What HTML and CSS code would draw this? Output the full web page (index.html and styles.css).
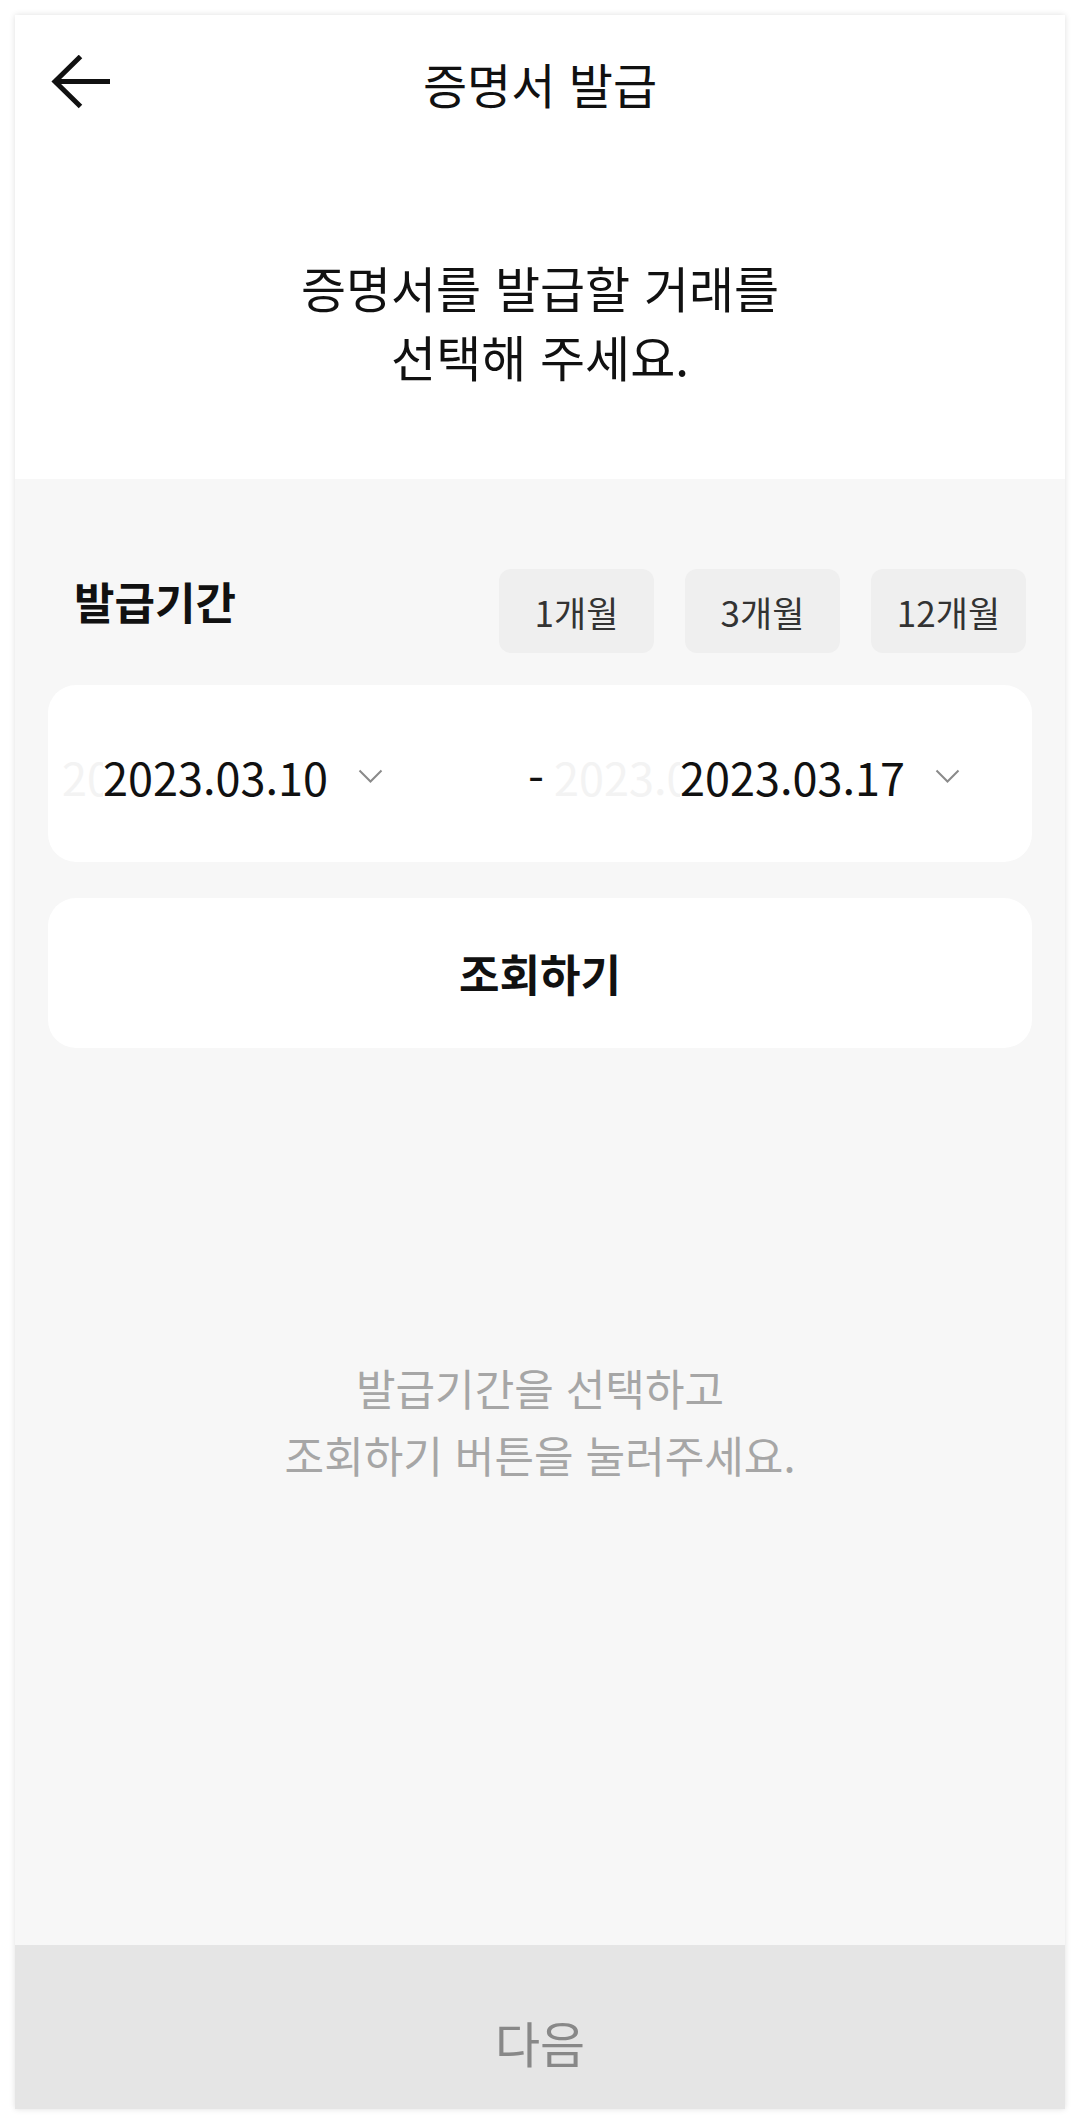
FILE: index.html
```html
<!DOCTYPE html>
<html lang="ko">
<head>
<meta charset="utf-8">
<title>증명서 발급</title>
<link rel="stylesheet" href="styles.css">
</head>
<body>
<div class="app">
  <section class="top">
    <header class="nav">
      <div class="nav-left">
        <svg class="back" width="60" height="56" viewBox="0 0 60 56" aria-hidden="true">
          <path d="M59 26.5 H4 M29.5 1.5 L4 26.5 L29.5 51.5" fill="none" stroke="#111" stroke-width="5" stroke-linejoin="miter" stroke-miterlimit="10"/>
        </svg>
      </div>
      <h1 class="title">증명서 발급</h1>
      <div class="nav-right"></div>
    </header>
    <p class="intro">증명서를 발급할 거래를<br>선택해 주세요.</p>
  </section>

  <main class="content">
    <div class="period-row">
      <span class="period-label">발급기간</span>
      <div class="chips">
        <button class="chip">1개월</button>
        <button class="chip">3개월</button>
        <button class="chip">12개월</button>
      </div>
    </div>

    <div class="date-box">
      <div class="field field-start">
        <span class="ghost">2023.03.10</span>
        <div class="select select-start">
          <span class="date">2023.03.10</span>
          <svg class="chev" width="25" height="15" viewBox="0 0 25 15" aria-hidden="true">
            <path d="M1.5 1.5 L12.5 12.5 L23.5 1.5" fill="none" stroke="#8a8a8a" stroke-width="2"/>
          </svg>
        </div>
      </div>
      <span class="dash">-</span>
      <div class="field field-end">
        <span class="ghost">2023.03.17</span>
        <div class="select select-end">
          <span class="date">2023.03.17</span>
          <svg class="chev" width="25" height="15" viewBox="0 0 25 15" aria-hidden="true">
            <path d="M1.5 1.5 L12.5 12.5 L23.5 1.5" fill="none" stroke="#8a8a8a" stroke-width="2"/>
          </svg>
        </div>
      </div>
    </div>

    <button class="search">조회하기</button>

    <p class="empty">발급기간을 선택하고<br>조회하기 버튼을 눌러주세요.</p>
  </main>

  <footer class="bottom">
    <button class="next">다음</button>
  </footer>
</div>
</body>
</html>
```

FILE: styles.css
```css
* {
  box-sizing: border-box;
}

html, body {
  margin: 0;
  padding: 0;
  background: #ffffff;
}

body {
  font-family: "Noto Sans CJK KR", "Noto Sans", sans-serif;
  color: #111111;
}

button {
  font-family: inherit;
  border: none;
  margin: 0;
  padding: 0;
  cursor: pointer;
}

.app {
  margin: 15px;
  width: 1050px;
  height: 2094px;
  display: flex;
  flex-direction: column;
  background: #f7f7f7;
  box-shadow: 0 0 6px rgba(0, 0, 0, 0.13);
  overflow: hidden;
}

/* top white area */
.top {
  background: #ffffff;
  height: 464px;
  flex: none;
}

.nav {
  height: 136px;
  display: grid;
  grid-template-columns: 1fr auto 1fr;
  align-items: center;
}

.nav-left {
  padding-left: 36px;
  display: flex;
  align-items: center;
}

.back {
  display: block;
}

.title {
  margin: 0;
  font-size: 48px;
  font-weight: 400;
  color: #111111;
}

.intro {
  margin: 0;
  padding-top: 101px;
  font-size: 49px;
  line-height: 69px;
  text-align: center;
  color: #111111;
}

/* grey content */
.content {
  flex: 1;
  padding: 90px 33px 0;
  display: flex;
  flex-direction: column;
}

.period-row {
  display: flex;
  justify-content: space-between;
  align-items: flex-start;
  padding-left: 26px;
  padding-right: 6px;
}

.period-label {
  font-size: 44px;
  font-weight: 700;
  color: #111111;
}

.chips {
  display: flex;
  gap: 31px;
}

.chip {
  width: 155px;
  height: 84px;
  border-radius: 12px;
  background: #efefef;
  color: #333333;
  font-size: 35px;
  display: flex;
  align-items: center;
  justify-content: center;
}

.date-box {
  margin-top: 32px;
  height: 177px;
  background: #ffffff;
  border-radius: 28px;
  display: flex;
  align-items: center;
  padding-left: 14px;
  padding-top: 6px;
}

.field {
  position: relative;
  font-size: 45px;
}

.field-start {
  width: 466px;
}

.field-end {
  margin-left: 11px;
  flex: 1;
}

.ghost {
  color: #f3f3f3;
  white-space: nowrap;
}

.select {
  position: absolute;
  top: 0;
  bottom: 0;
  background: #ffffff;
  display: flex;
  align-items: center;
  gap: 30px;
  padding-right: 20px;
}

.select-start {
  left: 41px;
}

.select-end {
  left: 126px;
}

.date {
  color: #111111;
  white-space: nowrap;
}

.chev {
  display: block;
}

.dash {
  font-size: 46px;
  color: #111111;
  width: 15px;
}

.search {
  margin-top: 36px;
  height: 150px;
  width: 100%;
  border-radius: 28px;
  background: #ffffff;
  font-size: 44px;
  font-weight: 700;
  color: #111111;
}

.empty {
  margin: 306px 0 0;
  font-size: 43px;
  line-height: 67px;
  text-align: center;
  color: #a6a6a6;
}

/* bottom */
.bottom {
  flex: none;
  height: 164px;
  background: #e5e5e5;
}

.next {
  width: 100%;
  height: 100%;
  padding-top: 28px;
  background: transparent;
  font-size: 49px;
  color: #888888;
  display: flex;
  align-items: center;
  justify-content: center;
}
```
